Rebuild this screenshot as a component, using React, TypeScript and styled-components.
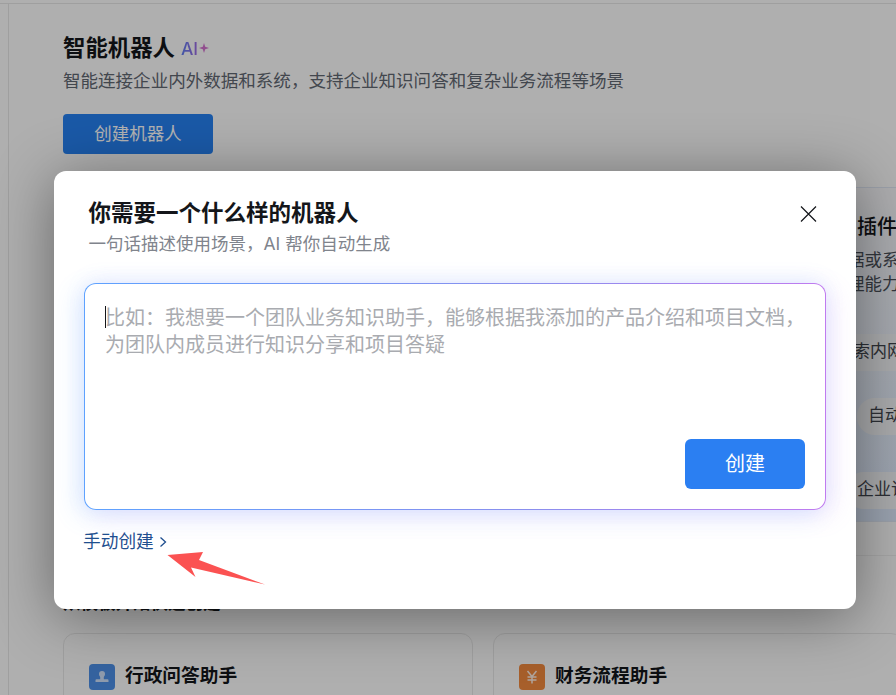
import React from "react";
import styled, { createGlobalStyle } from "styled-components";

const Global = createGlobalStyle`
  html, body { margin: 0; padding: 0; background: #fff; }
  body { font-family: "Inter", "Noto Sans CJK SC", "Noto Sans", sans-serif; }
  * { box-sizing: border-box; }
`;

const Page = styled.div`
  position: relative;
  width: 896px;
  height: 695px;
  overflow: hidden;
  display: flex;
  flex-direction: column;
  background: #fbfbfb;
`;
const TopStrip = styled.div`
  height: 4px;
  flex: none;
  border-bottom: 1px solid #e4e4e4;
`;
const Body = styled.div`
  flex: 1;
  display: flex;
  min-height: 0;
`;
const SideStrip = styled.div`
  width: 9px;
  flex: none;
  border-right: 1px solid #e4e4e4;
`;
const Main = styled.main`
  flex: 1;
  min-width: 0;
  padding: 27px 0 0 54px;
`;
const HeadingLine = styled.div`
  display: flex;
  align-items: center;
  gap: 6px;
  height: 34px;
`;
const PageTitle = styled.h1`
  margin: 0;
  font-size: 22.4px;
  line-height: 34px;
  font-weight: 700;
  color: #14161a;
`;
const AiMark = styled.span`
  font-family: "Inter", sans-serif;
  font-size: 17.5px;
  font-weight: 500;
  background: linear-gradient(90deg, #5d7df0, #a06ae0);
  background-clip: text;
  -webkit-background-clip: text;
  color: transparent;
`;
const PageDesc = styled.p`
  margin: 3px 0 0;
  font-size: 17.55px;
  line-height: 26px;
  color: #5f6670;
`;
const PrimaryButton = styled.button`
  display: block;
  margin-top: 20px;
  padding: 0 0 3px;
  width: 150px;
  height: 40px;
  border: none;
  border-radius: 4px;
  background: #2680f0;
  color: #fff;
  font: inherit;
  font-size: 17.5px;
`;
const FeatureRow = styled.div`
  margin-top: 33px;
  display: flex;
  gap: 20px;
  width: 1100px;
`;
const FeatureCard = styled.section`
  flex: none;
  width: 710px;
  height: 335px;
  border-radius: 12px;
  padding: 24px 0 0 18px;
  border: 1px solid #dfe6f2;
  background: linear-gradient(180deg, #f7f7f9 0%, #dce8fb 100%);
  &:first-child { background: #f6f7fa; }
`;
const FeatureTitle = styled.h2`
  margin: 0 0 0 5px;
  font-size: 20px;
  line-height: 30px;
  font-weight: 500;
  color: #14161a;
`;
const FeatureDesc = styled.p`
  margin: 6px 0 0;
  font-size: 17.5px;
  line-height: 24px;
  color: #4a4f58;
  white-space: nowrap;
`;
const ChipStack = styled.div`
  margin-top: 38px;
  display: flex;
  flex-direction: column;
  gap: 27px;
`;
const Chip = styled.span<{ $indent: number; $drop?: number }>`
  align-self: flex-start;
  margin-left: ${(p) => p.$indent}px;
  margin-top: ${(p) => p.$drop ?? 0}px;
  height: 37px;
  padding: 0 11px;
  border-radius: 18px;
  background: #f3f4f6;
  color: #3f444c;
  font-size: 17px;
  line-height: 35px;
  white-space: nowrap;
`;
const Rule = styled.hr`
  margin: 33px 0 0;
  border: none;
  border-top: 1px solid #ececec;
`;
const SectionTitle = styled.h2`
  margin: 34px 0 0;
  font-size: 17.5px;
  line-height: 26px;
  font-weight: 700;
  color: #14161a;
`;
const TemplateRow = styled.div`
  margin-top: 17px;
  display: flex;
  gap: 20px;
  width: 900px;
`;
const TemplateCard = styled.section`
  flex: none;
  width: 410px;
  height: 120px;
  border: 1px solid #e6e6e6;
  border-radius: 12px;
  padding: 30px 0 0 25px;
  display: flex;
  align-items: flex-start;
  gap: 10px;
`;
const TemplateIcon = styled.div<{ $bg: string }>`
  width: 26px;
  height: 26px;
  border-radius: 4px;
  flex: none;
  background: ${(p) => p.$bg};
  display: flex;
  align-items: center;
  justify-content: center;
`;
const TemplateTitle = styled.h3`
  margin: -1px 0 0;
  font-size: 18.7px;
  line-height: 26px;
  font-weight: 700;
  color: #14161a;
`;
const Overlay = styled.div`
  position: absolute;
  inset: 0;
  background: rgba(0, 0, 0, 0.3);
`;
const Modal = styled.div`
  position: absolute;
  left: 54px;
  top: 171px;
  width: 802px;
  height: 438px;
  border-radius: 12px;
  background: #fff;
  box-shadow: 0 8px 60px rgba(0, 0, 0, 0.42);
  padding: 26px 30px 0;
  display: flex;
  flex-direction: column;
`;
const ModalHead = styled.header`
  display: flex;
  justify-content: space-between;
  padding: 0 0 0 4.5px;
`;
const ModalTitle = styled.h2`
  margin: 0;
  font-size: 22.5px;
  line-height: 32px;
  font-weight: 700;
  color: #14161a;
`;
const ModalSub = styled.p`
  margin: 2px 0 0;
  font-size: 17.5px;
  line-height: 26px;
  color: #80848c;
`;
const CloseButton = styled.button`
  width: 20px;
  height: 20px;
  margin: 7px 7px 0 0;
  padding: 0;
  border: none;
  background: none;
  color: #14161a;
  display: flex;
`;
const PromptBox = styled.div`
  position: relative;
  margin-top: 26px;
  height: 227px;
  border: 1px solid transparent;
  border-radius: 12px;
  background:
    linear-gradient(#fff, #fff) padding-box,
    linear-gradient(90deg, #5ea2ff, #8a8fee 60%, #c07bf0) border-box;
  box-shadow: -8px 6px 24px rgba(90, 165, 255, 0.16), 8px 6px 24px rgba(190, 130, 245, 0.16),
    0 -4px 20px rgba(120, 170, 255, 0.1);
  padding: 21px 20px 0;
  display: flex;
  flex-direction: column;
`;
const Placeholder = styled.div`
  font-size: 20px;
  line-height: 27px;
  color: #a9abb0;
`;
const Caret = styled.span`
  position: absolute;
  left: 20px;
  top: 22px;
  width: 1px;
  height: 22px;
  background: #14161a;
`;
const CreateButton = styled.button`
  position: absolute;
  right: 20px;
  bottom: 20px;
  width: 120px;
  height: 50px;
  padding: 0 0 4px;
  border: none;
  border-radius: 6px;
  background: #2b7ff2;
  color: #fff;
  font: inherit;
  font-size: 20px;
`;
const ManualLink = styled.a`
  margin: 19px 0 0 -1px;
  display: inline-flex;
  align-items: center;
  gap: 3px;
  align-self: flex-start;
  font-size: 17.7px;
  line-height: 26px;
  color: #1f4f8f;
`;
const Annotation = styled.svg`
  position: absolute;
  left: 160px;
  top: 545px;
`;

export default function App() {
  return (
    <Page>
      <Global />
      <TopStrip />
      <Body>
        <SideStrip />
        <Main>
          <HeadingLine>
            <PageTitle>智能机器人</PageTitle>
            <AiMark>AI</AiMark>
            <svg width="10" height="10" viewBox="0 0 10 10" style={{ marginLeft: -5 }}>
              <path d="M5 0 L6.2 3.8 L10 5 L6.2 6.2 L5 10 L3.8 6.2 L0 5 L3.8 3.8 Z" fill="#d070cc" />
            </svg>
          </HeadingLine>
          <PageDesc>智能连接企业内外数据和系统，支持企业知识问答和复杂业务流程等场景</PageDesc>
          <PrimaryButton>创建机器人</PrimaryButton>
          <FeatureRow>
            <FeatureCard />
            <FeatureCard>
              <FeatureTitle>调用插件工具</FeatureTitle>
              <FeatureDesc>
                的数据或系统
                <br />
                强处理能力
              </FeatureDesc>
              <ChipStack>
                <Chip $indent={13}>搜索内网资料</Chip>
                <Chip $indent={45}>自动处理</Chip>
                <Chip $indent={34} $drop={10}>企业订单查询</Chip>
              </ChipStack>
            </FeatureCard>
          </FeatureRow>
          <Rule />
          <SectionTitle>从模板开始快速创建</SectionTitle>
          <TemplateRow>
            <TemplateCard>
              <TemplateIcon $bg="#4d8fe6">
                <svg width="18" height="18" viewBox="0 0 18 18" fill="#fff" opacity="0.72">
                  <path d="M9 3a3 3 0 0 1 3 3c0 1.3-.7 2.2-1.2 2.9v2.3h3.7a1 1 0 0 1 1 1V14H2.5v-1.8a1 1 0 0 1 1-1h3.7V8.9C6.7 8.2 6 7.3 6 6a3 3 0 0 1 3-3z" />
                </svg>
              </TemplateIcon>
              <TemplateTitle>行政问答助手</TemplateTitle>
            </TemplateCard>
            <TemplateCard>
              <TemplateIcon $bg="#f0883e">
                <svg width="18" height="18" viewBox="0 0 18 18" fill="none" stroke="#fff" strokeWidth="1.5" opacity="0.85">
                  <path d="M4.5 3 L9 8.5 L13.5 3 M9 8.5 V15.5 M4.5 9 H13.5 M4.5 12 H13.5" />
                </svg>
              </TemplateIcon>
              <TemplateTitle>财务流程助手</TemplateTitle>
            </TemplateCard>
          </TemplateRow>
        </Main>
      </Body>
      <Overlay />
      <Modal>
        <ModalHead>
          <div>
            <ModalTitle>你需要一个什么样的机器人</ModalTitle>
            <ModalSub>一句话描述使用场景，AI 帮你自动生成</ModalSub>
          </div>
          <CloseButton aria-label="关闭">
            <svg width="20" height="20" viewBox="0 0 20 20" fill="none" stroke="currentColor" strokeWidth="1.2">
              <path d="M2 2.5 L17 17.5 M17 2.5 L2 17.5" />
            </svg>
          </CloseButton>
        </ModalHead>
        <PromptBox>
          <Caret />
          <Placeholder>
            比如：我想要一个团队业务知识助手，能够根据我添加的产品介绍和项目文档，
            <br />
            为团队内成员进行知识分享和项目答疑
          </Placeholder>
          <CreateButton>创建</CreateButton>
        </PromptBox>
        <ManualLink>
          手动创建
          <svg width="12" height="14" viewBox="0 0 12 14" fill="none" stroke="currentColor" strokeWidth="1.3">
            <path d="M3.5 2.5 L8.5 7 L3.5 11.5" />
          </svg>
        </ManualLink>
      </Modal>
      <Annotation width="110" height="45" viewBox="160 545 110 45">
        <path d="M167.5 555 L203 552 L199 560 L265 584.5 L191 567.5 L195.5 577 Z" fill="#fb5252" />
      </Annotation>
    </Page>
  );
}
